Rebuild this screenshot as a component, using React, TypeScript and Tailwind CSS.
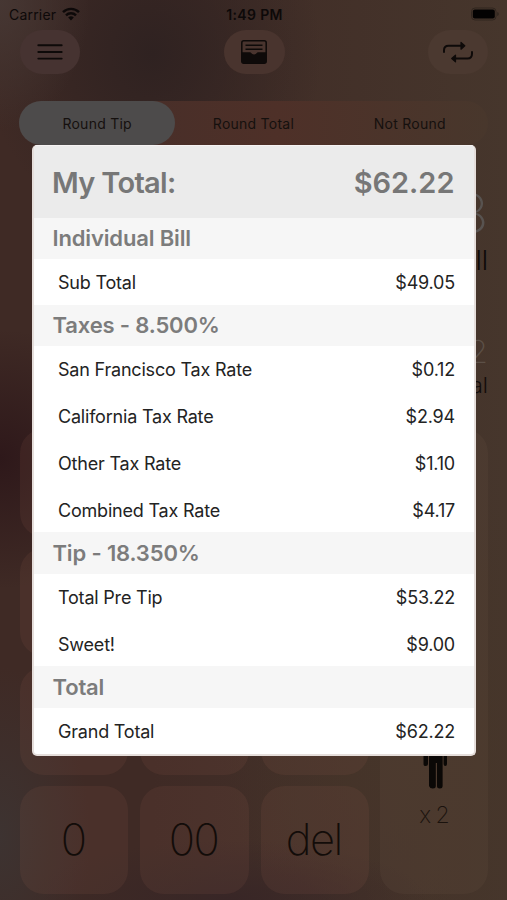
import React from 'react';

type Line = { label: string; amount: string };
type Section = { title: string; lines: Line[] };

const SECTIONS: Section[] = [
  { title: 'Individual Bill', lines: [{ label: 'Sub Total', amount: '$49.05' }] },
  {
    title: 'Taxes - 8.500%',
    lines: [
      { label: 'San Francisco Tax Rate', amount: '$0.12' },
      { label: 'California Tax Rate', amount: '$2.94' },
      { label: 'Other Tax Rate', amount: '$1.10' },
      { label: 'Combined Tax Rate', amount: '$4.17' },
    ],
  },
  {
    title: 'Tip - 18.350%',
    lines: [
      { label: 'Total Pre Tip', amount: '$53.22' },
      { label: 'Sweet!', amount: '$9.00' },
    ],
  },
  { title: 'Total', lines: [{ label: 'Grand Total', amount: '$62.22' }] },
];

const KEYS = ['', '', '', '', '', '', '', '', '', '0', '00', 'del'];

const StatusBar: React.FC = () => (
  <div className="grid grid-cols-3 items-center h-[28px] pl-[9px] pr-[7px] text-[14px] text-[#0d0909]">
    <div className="flex items-center gap-[6px] tracking-[0.2px]">
      <span>Carrier</span>
      <svg width="18" height="14" viewBox="0 0 18 14" fill="none" stroke="currentColor" strokeWidth="2.4">
        <path d="M1 5.2a11.4 11.4 0 0 1 16 0" />
        <path d="M4 8.3a7.1 7.1 0 0 1 10 0" />
        <path d="M9 13.4 6.2 10.6a4 4 0 0 1 5.6 0z" fill="currentColor" stroke="none" />
      </svg>
    </div>
    <span className="text-center font-semibold text-[14px] tracking-[0.35px]">1:49 PM</span>
    <svg className="justify-self-end" width="30" height="14" viewBox="0 0 30 14">
      <rect x="1.5" y="1" width="24.5" height="12" rx="3.5" fill="none" stroke="#30261f" />
      <rect x="2.8" y="2.5" width="22" height="9" rx="2" fill="#030202" />
      <path d="M27.2 5v4q1.6-.6 1.6-2t-1.6-2z" fill="#30261f" />
    </svg>
  </div>
);

const Toolbar: React.FC = () => (
  <div className="flex justify-between h-[44px] mt-[2px] pl-5 pr-[19px] text-[#0e0a09]">
    <button className="flex items-center justify-center w-[60px] h-[44px] rounded-full bg-[#463331]">
      <svg className="-ml-px" width="26" height="18" viewBox="0 0 26 18" stroke="currentColor" strokeWidth="1.9" strokeLinecap="round">
        <path d="M1.3 2.2h23.4M1.3 9h23.4M1.3 15.6h23.4" />
      </svg>
    </button>
    <button className="flex items-center justify-center w-[61px] h-[44px] rounded-full bg-[#49342e]">
      <svg width="28" height="26" viewBox="0 0 28 26">
        <rect x="1.8" y="1.7" width="24.4" height="22.6" rx="2" fill="none" stroke="currentColor" strokeWidth="1.5" />
        <path d="M5.5 6.3h17M5.5 10.3h17" stroke="currentColor" strokeWidth="1.6" />
        <path d="M1.7 13.2h8.3q.8 0 1.2.8.8 1.4 2.8 1.4t2.8-1.4q.4-.8 1.2-.8h8.3v9q0 2-2 2H3.7q-2 0-2-2z" fill="currentColor" />
      </svg>
    </button>
    <button className="flex items-center justify-center w-[60px] h-[44px] rounded-full bg-[#4b3930]">
      <svg width="32" height="24" viewBox="0 0 32 24" fill="none" stroke="currentColor" strokeWidth="2" strokeLinecap="round" strokeLinejoin="round">
        <path d="M2 12v-1.7q0-4.5 4.5-4.5H20" />
        <path d="M19 2.4 22.8 5.8 19 9.2z" fill="currentColor" strokeWidth="1.2" />
        <path d="M30 12v1.7q0 4.8-4.5 4.8H12" />
        <path d="M13.5 15.1 9.7 18.5l3.8 3.4z" fill="currentColor" strokeWidth="1.2" />
      </svg>
    </button>
  </div>
);

const RoundingTabs: React.FC = () => (
  <div className="grid grid-cols-3 h-[44px] mt-[27px] mx-[19px] rounded-full bg-linear-to-r from-[#432d29] via-[#4e3028] via-55% to-[#48372c] text-[14px] tracking-[0.25px] text-[#15100e]">
    <div className="flex items-center justify-center rounded-full bg-[#4d4b4b]">Round Tip</div>
    <div className="flex items-center justify-center">Round Total</div>
    <div className="flex items-center justify-center">Not Round</div>
  </div>
);

const Amounts: React.FC = () => (
  <div className="h-[284px] pt-[39px] pr-[19px] text-right">
    <div className="h-[60px] text-[54px] leading-[60px] font-extralight text-[#585350]">8</div>
    <div className="h-[32px] mt-px text-[27px] leading-[32px] font-light text-[#0e0a08]">ll</div>
    <div className="h-[40px] mt-[55px] text-[32px] leading-[40px] font-extralight text-[#5c5047]">2</div>
    <div className="h-[26px] text-[22px] leading-[26px] font-light text-[#120c0a]">al</div>
  </div>
);

const Keypad: React.FC = () => (
  <div className="flex gap-[11px] h-[465px] pl-5 pr-[19px]">
    <div className="grid grid-cols-3 grid-rows-4 gap-x-[12px] gap-y-[11px] w-[349px]">
      {KEYS.map((key, i) => (
        <div
          key={i}
          className="flex items-center justify-center pr-[2px] rounded-[24px] bg-[#9a6650]/12 text-[43.5px] font-extralight tracking-[-1.5px] text-[#120c09]"
        >
          {key}
        </div>
      ))}
    </div>
    <div className="flex flex-col items-center flex-1 rounded-[24px] bg-[#7a6550]/12 text-[#0b0806]">
      <svg className="mt-[276px] ml-px" width="24" height="84" viewBox="0 0 24 84" fill="currentColor">
        <circle cx="12" cy="9" r="7" />
        <path d="M4 19h16q4 0 4 4v36q0 2-1.7 2t-1.7-2V30h-1v51q0 2.5-2.8 2.5t-2.8-2.5V58h-1.2v23q0 2.5-3 2.5T6 81V30H5v29q0 2-2.3 2T.5 59V23q0-4 3.5-4z" />
      </svg>
      <span className="mt-[11px] text-[23px] leading-[30px] tracking-[-1px] font-extralight text-[#1a120d]">x 2</span>
    </div>
  </div>
);

const TotalDialog: React.FC = () => (
  <div className="w-[444px] h-[611px] rounded-[5px] overflow-hidden border-2 border-t-0 border-[#e5dedb] bg-white">
    <div className="flex items-center justify-between h-[72.5px] pt-[2px] pl-[18.5px] pr-[19px] border-t border-[#f6f3f3] bg-[#ebebeb] text-[29px] font-semibold text-[#777777]">
      <h1 className="tracking-[-0.7px]">My Total:</h1>
      <span>$62.22</span>
    </div>
    {SECTIONS.map(section => (
      <section key={section.title}>
        <h2 className="flex items-center h-[41.5px] pl-[19px] bg-[#f6f6f6] text-[22px] tracking-[-0.15px] font-semibold text-[#7c7c7c]">
          {section.title}
        </h2>
        <div className="flex flex-col gap-[1.3px]">
          {section.lines.map(line => (
            <div key={line.label} className="flex items-center justify-between h-[45.6px] pt-px pl-[24.5px] pr-[18.5px] text-[18px] tracking-[-0.2px] text-[#232323]">
              <span>{line.label}</span>
              <span>{line.amount}</span>
            </div>
          ))}
        </div>
      </section>
    ))}
  </div>
);

export default function App() {
  return (
    <div className="relative w-[507px] h-[900px] overflow-hidden font-['Inter','Liberation_Sans',sans-serif] bg-[#412d27] bg-[radial-gradient(ellipse_90px_130px_at_0%_0%,#463733,transparent),radial-gradient(ellipse_170px_180px_at_30%_6%,#2f2221,transparent),radial-gradient(ellipse_130px_130px_at_0%_51%,#2e181a,transparent),radial-gradient(ellipse_90px_170px_at_0%_93%,#3d3331,transparent),radial-gradient(ellipse_200px_60px_at_45%_100%,#382626,transparent),radial-gradient(ellipse_190px_260px_at_82%_82%,#463529,transparent),linear-gradient(to_right,#3f2a25_30%,#46362c)]">
      <StatusBar />
      <Toolbar />
      <RoundingTabs />
      <Amounts />
      <Keypad />
      <div className="absolute inset-0 flex justify-center pt-[145px]">
        <TotalDialog />
      </div>
    </div>
  );
}
